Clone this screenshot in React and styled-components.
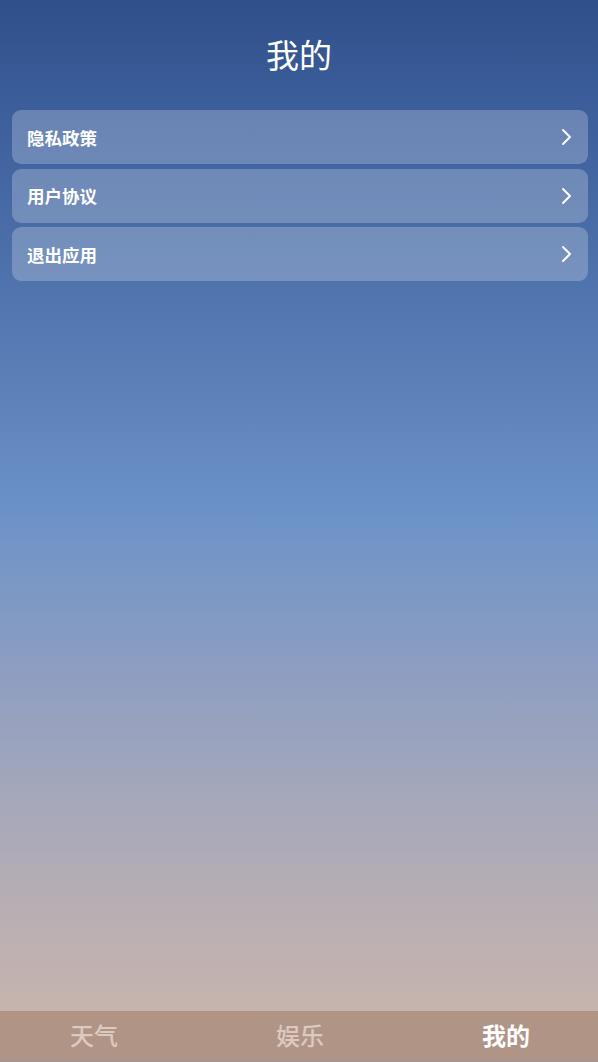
import React, { useState } from "react"
import styled, { createGlobalStyle } from "styled-components"

const GlobalStyle = createGlobalStyle`
  html, body {
    margin: 0;
    padding: 0;
  }
  body {
    font-family: "Noto Sans CJK SC", "Noto Sans", sans-serif;
  }
`

const Screen = styled.div`
  width: 598px;
  height: 1062px;
  display: flex;
  flex-direction: column;
  background: linear-gradient(
    180deg,
    #2f4f8a 0%,
    #3e619d 12%,
    #5377b0 30%,
    #6b92c8 48%,
    #8b9dc2 62%,
    #a7a8ba 76%,
    #bcb0b2 88%,
    #cdb6aa 100%
  );
  overflow: hidden;
`

const Title = styled.h1`
  margin: 0;
  padding: 31px 0 0;
  height: 78px;
  box-sizing: border-box;
  text-align: center;
  font-size: 33px;
  font-weight: 400;
  line-height: 46px;
  color: #fff;
`

const Menu = styled.div`
  flex: 1;
  display: flex;
  flex-direction: column;
  gap: 4.5px;
  padding: 32px 10px 0 12px;
`

const Row = styled.div`
  height: 54px;
  display: flex;
  align-items: center;
  justify-content: space-between;
  padding: 0 16px 0 15px;
  border-radius: 9px;
  background: rgba(255, 255, 255, 0.23);
  color: #fff;
  font-size: 17.5px;
  font-weight: 700;
  cursor: pointer;
`

const TabBar = styled.div`
  height: 51px;
  box-sizing: border-box;
  display: flex;
  align-items: center;
  justify-content: space-between;
  padding: 0 68px 0 70px;
  background: #b09587;
  border-bottom: 3px solid #a3968f;
`

const Tab = styled.div`
  font-size: 24px;
  font-weight: ${(p) => (p.active ? 700 : 500)};
  color: ${(p) => (p.active ? "#ffffff" : "#dccac1")};
  line-height: 1;
  cursor: pointer;
`

function Chevron() {
  return (
    <svg width="11" height="18" viewBox="0 0 11 18" fill="none">
      <path d="M2 2l7 7-7 7" stroke="#fff" strokeWidth="2" strokeLinecap="round" strokeLinejoin="round" />
    </svg>
  )
}

const items = ["隐私政策", "用户协议", "退出应用"]
const tabs = ["天气", "娱乐", "我的"]

export default function App() {
  const [tab, setTab] = useState(2)

  return (
    <>
      <GlobalStyle />
      <Screen>
        <Title>我的</Title>
        <Menu>
          {items.map((item) => (
            <Row key={item}>
              <span>{item}</span>
              <Chevron />
            </Row>
          ))}
        </Menu>
        <TabBar>
          {tabs.map((t, i) => (
            <Tab key={t} active={i === tab} onClick={() => setTab(i)}>
              {t}
            </Tab>
          ))}
        </TabBar>
      </Screen>
    </>
  )
}
